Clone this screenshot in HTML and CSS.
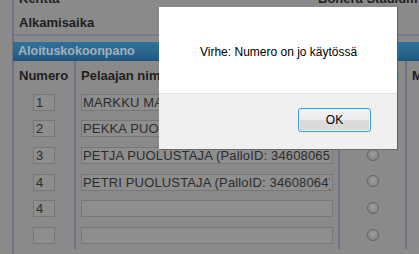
FILE: index.html
```html
<!DOCTYPE html>
<html>
<head>
    <meta charset="UTF-8">
    <title>Ottelu</title>
    <link rel="stylesheet" href="styles.css">
</head>
<body>
    <div class="page">
        <div class="side"></div>
        <div class="main">
            <div class="info">
                <div class="info-row">
                    <span>Kenttä</span>
                    <span>Bonera Stadium</span>
                </div>
                <div class="info-row">
                    <span>Alkamisaika</span>
                    <span></span>
                </div>
            </div>

            <div class="section">
                <div class="section-title">Aloituskokoonpano</div>
                <div class="lineup">
                    <div class="cell head">Numero</div>
                    <div class="cell head">Pelaajan nimi</div>
                    <div class="cell head">Kapteeni</div>
                    <div class="cell head">Maalivahti</div>

                    <div class="cell num"><input type="text" value="1"></div>
                    <div class="cell name"><input type="text" value="MARKKU MAALIVAHTI (PalloID: 34608067)"></div>
                    <div class="cell pick"><span class="radio"></span></div>
                    <div class="cell"></div>

                    <div class="cell num"><input type="text" value="2"></div>
                    <div class="cell name"><input type="text" value="PEKKA PUOLUSTAJA (PalloID: 34608066)"></div>
                    <div class="cell pick"><span class="radio"></span></div>
                    <div class="cell"></div>

                    <div class="cell num"><input type="text" value="3"></div>
                    <div class="cell name"><input type="text" value="PETJA PUOLUSTAJA (PalloID: 34608065)"></div>
                    <div class="cell pick"><span class="radio"></span></div>
                    <div class="cell"></div>

                    <div class="cell num"><input type="text" value="4"></div>
                    <div class="cell name"><input type="text" value="PETRI PUOLUSTAJA (PalloID: 34608064)"></div>
                    <div class="cell pick"><span class="radio"></span></div>
                    <div class="cell"></div>

                    <div class="cell num"><input type="text" value="4"></div>
                    <div class="cell name"><input type="text" value=""></div>
                    <div class="cell pick"><span class="radio"></span></div>
                    <div class="cell"></div>

                    <div class="cell num"><input type="text" value=""></div>
                    <div class="cell name"><input type="text" value=""></div>
                    <div class="cell pick"><span class="radio"></span></div>
                    <div class="cell"></div>
                </div>
            </div>
        </div>
    </div>

    <div class="shade"></div>

    <div class="dialog">
        <div class="dialog-body">Virhe: Numero on jo käytössä</div>
        <div class="dialog-footer">
            <button type="button">OK</button>
        </div>
    </div>
</body>
</html>
```

FILE: styles.css
```css
body { margin: 0; background: #8e8e8e; font-family: "Liberation Sans", Arial, sans-serif; color: #1f1f1f; overflow: hidden; }
.page { display: flex; min-height: 254px; }
.side { width: 12px; flex: none; border-right: 2px solid #737385; }
.main { flex: 1; }

.info { margin-top: -14px; border-bottom: 2px solid #7e7e8a; }
.info-row { display: grid; grid-template-columns: 299px 1fr; height: 24px; align-items: center; padding-left: 5px; font-size: 13px; font-weight: bold; white-space: nowrap; }

.section { margin-top: 6px; }
.section-title { height: 19px; line-height: 19px; margin-left: -1px; padding-left: 5px; background: linear-gradient(#31749f, #2a6891 60%, #205780); color: #a8b4bf; font-size: 12.5px; font-weight: bold; }

.lineup { display: grid; grid-template-columns: 62px 264px 67px 1fr; grid-template-rows: 28px; grid-auto-rows: 26.67px; }
.cell { box-sizing: border-box; border-right: 2px solid #737385; display: flex; align-items: center; white-space: nowrap; overflow: hidden; }
.cell:nth-child(4n) { border-right: none; }
.head { padding-left: 5px; font-size: 13px; font-weight: bold; }
.head:nth-child(3) { padding-left: 4px; }
.num { justify-content: center; }
.name { padding-left: 5px; }
.pick { justify-content: center; }

input { box-sizing: border-box; height: 17px; border: 1px solid #7b7b7b; background: #929292; color: #2e2e2e; font-family: "Liberation Sans", Arial, sans-serif; font-size: 13px; letter-spacing: 0.15px; padding: 0 2px; margin: 0; }
.num input { width: 22px; }
.name input { width: 252px; padding-left: 1px; }

.radio { width: 12px; height: 12px; box-sizing: border-box; border-radius: 50%; border: 1px solid #656565; background: radial-gradient(circle at 50% 40%, #a2a2a2, #8c8c8c 70%, #808080); margin-top: -2px; }

.shade { position: fixed; inset: 0; background: repeating-conic-gradient(rgba(0, 0, 0, 0.05) 0 25%, transparent 0 50%) 0 0 / 2px 2px; }

.dialog { position: absolute; left: 159px; top: 7px; width: 239px; height: 143px; box-sizing: border-box; border-right: 1px solid #5e5e5e; border-bottom: 1px solid #6a6a6a; background: #f0f0f0; display: flex; flex-direction: column; font-size: 12px; color: #000; }
.dialog-body { height: 87px; box-sizing: border-box; background: #fff; border-bottom: 1px solid #dfdfdf; display: flex; align-items: center; padding: 3px 0 0 41px; }
.dialog-footer { display: flex; justify-content: flex-end; padding: 14px 26px 0 0; }
button { width: 73px; height: 24px; border: 1px solid #3c9fdf; border-radius: 3px; background: linear-gradient(#f4f4f4, #ebebeb 50%, #dcdcdc 51%, #d8d8d8); box-shadow: inset 0 0 0 1px #e4f3fc; font-family: "Liberation Sans", Arial, sans-serif; font-size: 12px; color: #000; padding: 0; }
```
